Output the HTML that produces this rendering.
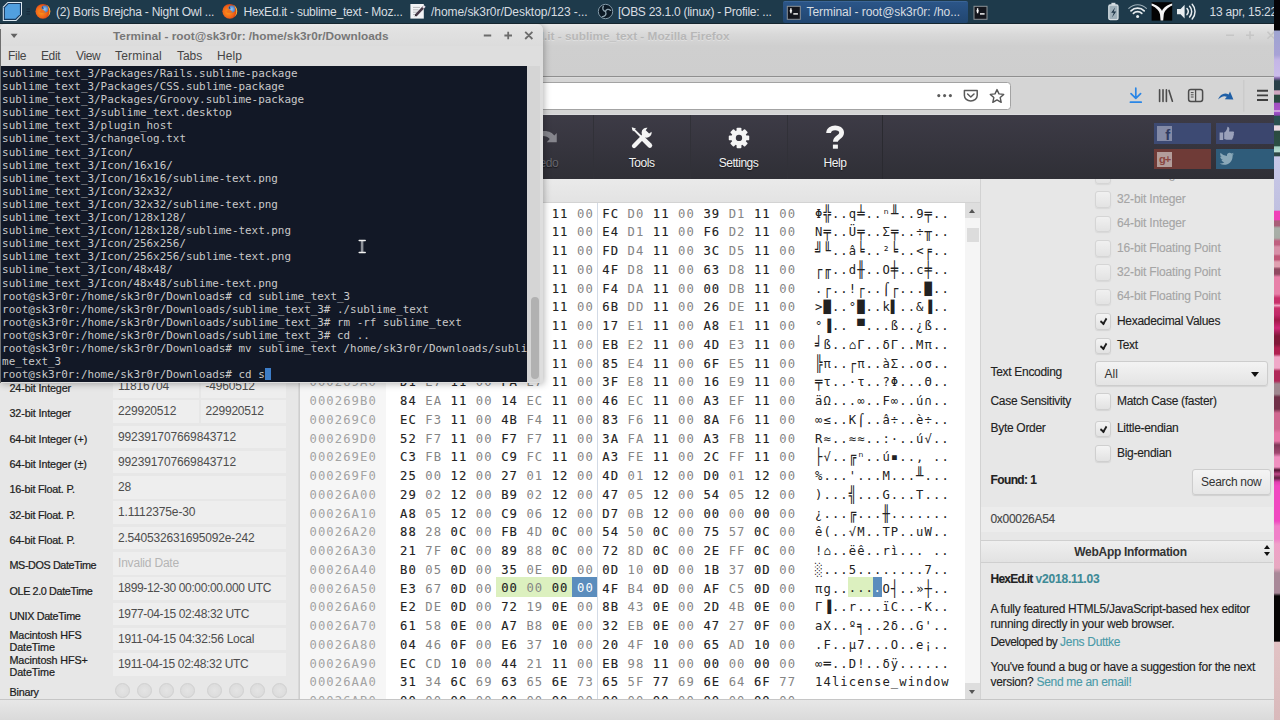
<!DOCTYPE html>
<html lang="en">
<head>
<meta charset="utf-8">
<title>HexEd.it - sublime_text - Mozilla Firefox</title>
<style>
*{box-sizing:border-box;margin:0;padding:0}
html,body{width:1280px;height:720px;overflow:hidden;background:#d6d6d6}
body{position:relative;font-family:"Liberation Sans",sans-serif;font-size:12px;color:#222}
.abs{position:absolute}
i,u{font-style:normal;text-decoration:none}

/* wallpaper strip */
#wall{left:1274px;top:0;width:6px;height:720px;z-index:50;background:linear-gradient(180deg,#050306 0px,#050306 30px,#9ea4d0 31px,#a8a2d6 55px,#c4b6e6 60px,#cbbcea 76px,#8a6ab0 78px,#2a4048 81px,#2a4048 89.5px,#d0a8c0 91px,#d0a8c0 94px,#2a4a40 95.5px,#2a4a40 102px,#a050c0 103.5px,#a854c8 109.5px,#e0c8e4 111px,#a050c8 112.5px,#8a48b0 115px,#2a5050 116.5px,#2a5050 124.5px,#e8d8e0 126px,#e8d8e0 130px,#2a4a40 131.5px,#2c5044 145.5px,#a0d0c0 147px,#b8dcd0 151.5px,#304848 153px,#304848 155.5px,#c8c8e8 157px,#c0c0e0 210px,#f040b8 211.5px,#f040b8 219.5px,#a86078 221px,#a86078 225.5px,#a8b0a8 228px,#a8aca6 238px,#c06080 241px,#c06080 244.5px,#d890a8 247px,#d890a8 254px,#c05878 256px,#c05878 259.5px,#e0a0b0 262px,#e0a0b0 266.5px,#904860 269px,#904860 274px,#e880a8 277px,#e880a8 294px,#c8306a 298px,#c8306a 303px,#f0a0c0 305.5px,#c8306a 308px,#c02868 315px,#a01848 320px,#d02878 328px,#801838 336px,#801838 344px,#b02050 348px,#b02050 354px,#f0a8c8 357px,#f0a8c8 368px,#b02858 371px,#b02858 381px,#a08890 384px,#a08890 394px,#703048 397px,#703048 409px,#d06890 413px,#d06890 429px,#e878a8 433px,#e878a8 441px,#803858 445px,#a04870 453px,#f090c0 457px,#f090c0 467px,#501030 470px,#c04888 474px,#602040 478px,#e040b0 482px,#f048c0 486px,#f048c0 521px,#f080c8 526px,#f080c8 539px,#f0a0c8 544px,#e8a8c0 568px,#a88898 573px,#a88898 593px,#060405 596px,#060405 641px,#e2c2c4 642.5px,#d9b9bb 720px)}

/* top panel */
#panel{left:0;top:0;width:1280px;height:23.5px;background:#1e3a4b;border-bottom:1px solid #15262f;color:#d8dde1;font-size:12px;letter-spacing:-.22px;white-space:nowrap}
#panel .t{position:absolute;top:5px;line-height:14px}
#panel .act{position:absolute;left:783px;top:1px;width:185px;height:21.5px;background:linear-gradient(#2b5588,#214670);border-top:1px solid #3a6496;border-radius:2px}

/* firefox window */
#ff{left:0;top:0;width:1274px;height:720px;background:#cecece}
#fftitle{left:0;top:23.5px;width:1274px;height:53px;background:linear-gradient(#e9e9e9 0,#e3e3e3 3px,#d9d9d9 10px,#cfcfcf 22px,#cecece 53px);color:#b7b7b7;text-shadow:0 1px 0 rgba(255,255,255,.3);font-weight:bold;font-size:11.8px;white-space:nowrap}
#nav{left:0;top:76px;width:1274px;height:39px;background:#d5d5d5;border-top:1px solid #8f8f8f;border-bottom:1px solid #dcdcde;box-shadow:inset 0 1px 0 #dbdbdb}
#url{left:300px;top:5px;width:711px;height:28px;background:#fff;border:1px solid #a3a3a3;border-radius:3.5px}

/* web app */
#tool{left:0;top:115px;width:1274px;height:63.6px;background:linear-gradient(#3d3b46,#36353e 50%,#2f2f36);color:#f2f2f2}
.tb{position:absolute;top:0;height:63.6px;border-left:1px solid #313138;text-align:center;font-size:12px;letter-spacing:-.48px;text-shadow:0 1px 1px rgba(0,0,0,.5)}
.tb span{position:absolute;left:0;right:0;top:41px;line-height:14px}
.tb svg{position:absolute;left:50%;top:8.5px;margin-left:-13px}
#strip{left:299px;top:178.5px;width:681px;height:24.3px;background:linear-gradient(#eaeaea,#e3e3e3);border-bottom:1px solid #d3d3d3}
#lp{left:0;top:179px;width:299px;height:520px;background:#e7e7e7;border-right:1px solid #d8d8d8}
#hex{left:300px;top:203px;width:681px;height:496px;background:#fff;overflow:hidden}
#adbg{left:0;top:0;width:86px;height:496px;background:#f6f6f6}
#rp{left:980px;top:178.5px;width:294px;height:520.5px;background:#e7e7e7;border-left:1px solid #d2d2d2;overflow:hidden}
#status{left:0;top:699px;width:1274px;height:21px;background:linear-gradient(#e7e7e7,#e2e2e2 8px,#dadada);border-top:1px solid #c6c6c6}

/* hex rows */
.hr{position:absolute;left:0;height:18.75px;line-height:23px;font-family:"DejaVu Sans Mono","Liberation Mono",monospace;font-size:12.2px;letter-spacing:1.085px;white-space:pre;width:681px}
.hr .ad{position:absolute;left:9.5px;color:#a3a3a3}
.hr .hx{position:absolute;left:95.3px}
.hr .hx i{display:inline-block;width:25.29px;text-align:center;height:18.75px;vertical-align:top;padding-left:1px}
.hr .tx{position:absolute;left:515.04px}
.hr .tx u{display:inline-block;width:8.43px;height:18.75px;vertical-align:top;overflow:visible;letter-spacing:0;text-align:center;margin-left:-.54px;margin-right:.54px}
.hr .tx b{font-weight:normal;display:inline-block;height:19.4px;vertical-align:top;margin-top:-.3px;margin-left:-.54px;padding-left:.54px}
.hr .tx b.hb{margin-left:0;padding-left:0;position:relative;left:-.54px}
.bx{transform:scaleY(1.3);transform-origin:50% 62%}
.b{color:#222;font-weight:normal;-webkit-text-stroke:.12px #222}
.g{color:#858585}
.hg{background:#dcf0bf}
.hr i.hg,.hr i.hb{height:19.4px;margin-top:-.3px}
.hb{background:#5b8dbd;color:#fff !important}
#sep{left:297px;top:0;width:1px;height:496px;background:#d3dbe6}
#vsb{left:665px;top:0;width:15px;height:496px;background:#f5f5f5}

/* left panel */
.lr{position:absolute;left:9.5px;font-size:10.8px;letter-spacing:-.14px;color:#1c1c1c;white-space:nowrap;line-height:11.6px;-webkit-text-stroke:.22px #1c1c1c}
.vb{position:absolute;height:22.5px;background:#eeeeee;font-size:12px;letter-spacing:-.2px;color:#4d4d4d;line-height:23px;padding-left:5px;white-space:nowrap;overflow:hidden}

/* right panel */
.cb{position:absolute;left:113.5px;width:16.5px;height:16.5px;border-radius:3px;background:linear-gradient(#f4f4f4,#e2e2e2);border:1px solid #cfcfcf;box-shadow:0 1px 1px rgba(0,0,0,.08)}
.cl{position:absolute;left:136px;font-size:12px;letter-spacing:-.3px;white-space:nowrap;line-height:14px;color:#222;-webkit-text-stroke:.12px}
.dis{color:#a5a5a5;letter-spacing:-.15px}
.rl{position:absolute;left:9.5px;font-size:12px;letter-spacing:-.3px;white-space:nowrap;line-height:14px;color:#222;-webkit-text-stroke:.12px}
.ck:after{content:"";position:absolute;left:5px;top:3.4px;width:3px;height:5.4px;border:solid #1d1d1d;border-width:0 2px 2px 0;transform:rotate(42deg) skewX(12deg)}

/* terminal window */
#term{left:0;top:24px;width:542.5px;height:358.5px;background:#dedede;border-radius:5px 6px 0 0;box-shadow:1px 1px 7px rgba(0,0,0,.3)}
#ttitle{left:0;top:0;width:542.5px;height:22px;color:#777;font-weight:bold;font-size:11.8px;white-space:nowrap;background:linear-gradient(#e9e9e9,#e2e2e2 4px,#dcdcdc);border-radius:5px 6px 0 0}
#tmenu{left:0;top:22px;width:542px;height:20px;font-size:12px;letter-spacing:0;color:#454545}
#tmenu span{position:absolute;top:3px}
#tbody{left:0;top:42px;width:527.3px;height:316px;background:#121826;color:#c9c9c9;font-family:"DejaVu Sans Mono","Liberation Mono",monospace;font-size:10.92px;line-height:13.09px;white-space:pre;overflow:hidden;padding:1px 0 0 2.1px}
#tsb{left:527.3px;top:42px;width:12.9px;height:316px;background:#d5d5d5}
#tthumb{left:3.4px;top:231px;width:8.4px;height:82px;border-radius:4px;background:#b1b1b1}
.cur{background:#3d7dc8;display:inline-block;width:6px;height:12px;vertical-align:-2px}
</style>
</head>
<body>
<div id="ff" class="abs">
  <div id="fftitle" class="abs"><span class="abs" style="right:544.5px;top:5.5px">HexEd.it - sublime_text - Mozilla Firefox</span>
    <svg class="abs" style="left:1220px;top:4.5px" width="54" height="16" viewBox="0 0 54 16"><path d="M6,7.3 h8 M26,7.3 h8 M30,3.3 v8 M47.5,3.8 l7,7 M54.5,3.8 l-7,7" stroke="#c6c6c6" stroke-width="1.6" fill="none"/></svg></div>
  <div id="nav" class="abs"><div id="url" class="abs"></div>
    <svg class="abs" style="left:920px;top:0" width="354" height="39" viewBox="920 77 354 39">
      <g fill="#5c5c5c"><circle cx="938.8" cy="95.6" r="1.55"/><circle cx="944.6" cy="95.6" r="1.55"/><circle cx="950.4" cy="95.6" r="1.55"/></g>
      <path d="M964.4,90.4 H977.2 V95.4 A6.4,5.6 0 0 1 964.4,95.4 Z" fill="none" stroke="#595959" stroke-width="1.5" stroke-linejoin="round"/>
      <path d="M967.6,94 l3.2,3 l3.2,-3" fill="none" stroke="#595959" stroke-width="1.5" stroke-linecap="round" stroke-linejoin="round"/>
      <path d="M997,89.6 l2,4.3 l4.7,0.5 l-3.5,3.2 l1,4.7 l-4.2,-2.4 l-4.2,2.4 l1,-4.7 l-3.5,-3.2 l4.7,-0.5z" fill="none" stroke="#555" stroke-width="1.4" stroke-linejoin="round"/>
      <path d="M1135.8,88.2 v9.8 M1131,93.6 l4.8,4.8 l4.8,-4.8" fill="none" stroke="#2a86e6" stroke-width="1.7" stroke-linecap="round" stroke-linejoin="round"/>
      <path d="M1130.4,102.2 h10.8" stroke="#2a86e6" stroke-width="1.7" stroke-linecap="round"/>
      <path d="M1159.6,89.8 v11.6 M1163,89.8 v11.6 M1166.4,89.8 v11.6 M1169,90.4 l3.4,10.8" stroke="#4c4c4c" stroke-width="1.6" fill="none" stroke-linecap="round"/>
      <rect x="1188.6" y="89.6" width="14" height="11.8" rx="2.2" fill="none" stroke="#4c4c4c" stroke-width="1.5"/>
      <path d="M1195.6,89.6 v11.8" stroke="#4c4c4c" stroke-width="1.3"/>
      <path d="M1190.8,92.6 h2.8 M1190.8,94.8 h2.8 M1190.8,97 h2.8" stroke="#4c4c4c" stroke-width="1"/>
      <path d="M1218,99.6 C1220,94 1225,92.2 1228.6,94.6 L1230,91.4 L1233.4,99.6 L1224.8,99.2 L1226.8,96.8 C1224,95.4 1221,96.6 1218,99.6Z" fill="#1f5fa6"/>
      <path d="M1243.8,80 v31.6" stroke="#c6c6c6" stroke-width="1"/>
      <path d="M1257,90.8 h11 M1257,95.4 h11 M1257,100 h11" stroke="#3f3f3f" stroke-width="1.9"/>
    </svg>
  </div>
  <div id="tool" class="abs">
    <div class="tb" style="left:495.8px;width:96.9px;color:#66666d"><span>Redo</span>
      <svg width="26" height="26" viewBox="0 0 26 26" style="margin-left:-13px"><path d="M2,14 C4,9 8,7 10.75,7 C16.75,6.5 20.75,9 22.25,11.5 L24.75,9 L24.75,18.2 L14.75,18.2 L17.75,15 C16.25,13 13.75,12 10.75,12 C7,12 4,14 2,18Z" fill="#86868d"/></svg></div>
    <div class="tb" style="left:592.7px;width:96.9px"><span>Tools</span>
      <svg width="26" height="26" viewBox="0 0 26 26"><g transform="translate(12.6 13.4) scale(.9) translate(-13 -12.8)"><g fill="none" stroke="#f4f4f4" stroke-linecap="round">
        <path d="M3.4,3 L12,11.6" stroke-width="2.2"/><path d="M3.2,2.8 l2,0.6 l-1.4,1.4z" stroke-width="1.6"/><path d="M14.8,14.4 L22.2,21.8" stroke-width="5.2" stroke-linecap="round"/>
        <path d="M4.6,22.4 L15.2,11.6" stroke-width="4.8"/>
        </g>
        <path d="M19.57,2.08 A5.6,5.6 0 1 0 24.11,6.63 L21.4,8.6 L17.6,4.9 Z" fill="#f4f4f4"/></g>
      </svg></div>
    <div class="tb" style="left:689.6px;width:96.9px"><span>Settings</span>
      <svg width="26" height="26" viewBox="-13 -13 26 26"><g transform="translate(0 .9) scale(.93)"><g fill="#f4f4f4">
        <g id="gt"><rect x="-2.6" y="-11" width="5.2" height="22" rx="1"/></g>
        <use href="#gt" transform="rotate(45)"/><use href="#gt" transform="rotate(90)"/><use href="#gt" transform="rotate(135)"/>
        <circle r="8.2"/></g><circle r="3.4" fill="#37363f"/></g>
      </svg></div>
    <div class="tb" style="left:786.5px;width:96.9px;border-right:1px solid #2a2a30"><span>Help</span>
      <svg width="26" height="26" viewBox="0 -0.7 26 26"><path d="M6.6,8.4 C6.6,1.4 19.6,1.4 19.6,8 C19.6,12.6 13.4,12.4 13.4,17" fill="none" stroke="#f4f4f4" stroke-width="4.8"/><rect x="10.9" y="19.9" width="5" height="4.1" fill="#f4f4f4"/></svg></div>
    <div class="abs" style="left:1153.7px;top:7.5px;width:57.3px;height:21.3px;background:#3d4a73"><div class="abs" style="left:3.3px;top:3.2px;width:15.2px;height:15px;background:#838aa6;color:#2f3a60;font:bold 15px/17px 'Liberation Sans',sans-serif;text-align:right;padding-right:2px;overflow:hidden">f</div></div>
    <div class="abs" style="left:1216px;top:7.5px;width:58px;height:21.3px;background:#3b466e">
      <svg class="abs" style="left:3px;top:3px" width="16" height="15" viewBox="0 0 16 15"><path d="M0.6,6.4 h3.6 v7.6 h-3.6z M5.2,6.6 C7.4,5.4 8.2,3.2 8.4,0.8 C10.4,0.6 10.8,3 10,5.6 H14 C15.4,5.8 15.4,7.2 14.6,7.8 C15.2,8.6 15,9.6 14.2,10 C14.6,10.8 14.4,11.6 13.6,12 C13.8,13 13.2,13.8 12,13.8 H7.6 L5.2,13z" fill="#9aa1ba"/></svg></div>
    <div class="abs" style="left:1153.7px;top:34.1px;width:57.3px;height:20.3px;background:#6f3b37"><div class="abs" style="left:3.3px;top:2.8px;width:15.2px;height:15px;background:#b39d9a;color:#8a4640;font:bold 11px/14px 'Liberation Sans',sans-serif;letter-spacing:-1px;text-align:center;overflow:hidden">g+</div></div>
    <div class="abs" style="left:1216px;top:34.1px;width:58px;height:20.3px;background:#2f5c7a">
      <svg class="abs" style="left:3px;top:3px" width="16" height="14" viewBox="0 0 16 14"><path d="M15,2 C14.4,2.4 13.8,2.6 13.2,2.6 C14,2.2 14.4,1.6 14.6,0.8 C14,1.2 13.2,1.6 12.6,1.6 C10.6,-0.4 7.4,1.2 8,4 C5.4,3.8 3.2,2.6 1.6,0.8 C0.8,2.2 1.2,4 2.6,5 C2,5 1.6,4.8 1.2,4.6 C1.2,6.2 2.2,7.4 3.8,7.8 C3.4,8 2.8,8 2.4,7.8 C2.8,9.2 4,10 5.4,10.2 C4,11.2 2.4,11.6 0.6,11.4 C6.6,15.2 14,10.8 13.6,3.6 C14.2,3.2 14.6,2.6 15,2Z" fill="#8aa8b8"/></svg></div>
  </div>
  <div id="lp" class="abs">
<div class="lr" style="top:204.2px;letter-spacing:-0.150px">24-bit Integer</div>
<div class="lr" style="top:229.2px;letter-spacing:-0.150px">32-bit Integer</div>
<div class="lr" style="top:254.7px;letter-spacing:-0.140px">64-bit Integer (+)</div>
<div class="lr" style="top:280.2px;letter-spacing:-0.140px">64-bit Integer (±)</div>
<div class="lr" style="top:305.2px;letter-spacing:-0.220px">16-bit Float. P.</div>
<div class="lr" style="top:330.7px;letter-spacing:-0.220px">32-bit Float. P.</div>
<div class="lr" style="top:356.2px;letter-spacing:-0.220px">64-bit Float. P.</div>
<div class="lr" style="top:381.2px;letter-spacing:-0.390px">MS-DOS DateTime</div>
<div class="lr" style="top:406.7px;letter-spacing:-0.376px">OLE 2.0 DateTime</div>
<div class="lr" style="top:432.2px;letter-spacing:-0.320px">UNIX DateTime</div>
<div class="lr" style="top:451.1px">Macintosh HFS<br>DateTime</div>
<div class="lr" style="top:476.1px">Macintosh HFS+<br>DateTime</div>
<div class="lr" style="top:508.2px;letter-spacing:-.22px">Binary</div>
<div class="vb" style="left:113px;width:85.5px;top:196.0px">11816704</div><div class="vb" style="left:200.5px;width:85.5px;top:196.0px">-4960512</div>
<div class="vb" style="left:113px;width:85.5px;top:221.2px">229920512</div><div class="vb" style="left:200.5px;width:85.5px;top:221.2px">229920512</div>
<div class="vb" style="left:113px;width:173px;top:246.5px;letter-spacing:-.12px">992391707669843712</div>
<div class="vb" style="left:113px;width:173px;top:271.8px;letter-spacing:-.12px">992391707669843712</div>
<div class="vb" style="left:113px;width:173px;top:297.1px;letter-spacing:-.12px">28</div>
<div class="vb" style="left:113px;width:173px;top:322.4px;letter-spacing:-.12px">1.1112375e-30</div>
<div class="vb" style="left:113px;width:173px;top:347.7px;letter-spacing:-.2px">2.540532631695092e-242</div>
<div class="vb" style="left:113px;width:173px;top:373.0px;color:#b5b5b5">Invalid Date</div>
<div class="vb" style="left:113px;width:173px;top:398.3px;letter-spacing:-.36px">1899-12-30 00:00:00.000 UTC</div>
<div class="vb" style="left:113px;width:173px;top:423.6px;letter-spacing:-.36px">1977-04-15 02:48:32 UTC</div>
<div class="vb" style="left:113px;width:173px;top:448.9px;letter-spacing:-.26px">1911-04-15 04:32:56 Local</div>
<div class="vb" style="left:113px;width:173px;top:474.2px;letter-spacing:-.36px">1911-04-15 02:48:32 UTC</div>
<div class="abs" style="left:115.0px;top:503.5px;width:15px;height:15px;border-radius:50%;background:radial-gradient(#e4e4e4,#d9d9d9);border:1px solid #d0d0d0"></div>
<div class="abs" style="left:136.5px;top:503.5px;width:15px;height:15px;border-radius:50%;background:radial-gradient(#e4e4e4,#d9d9d9);border:1px solid #d0d0d0"></div>
<div class="abs" style="left:158.5px;top:503.5px;width:15px;height:15px;border-radius:50%;background:radial-gradient(#e4e4e4,#d9d9d9);border:1px solid #d0d0d0"></div>
<div class="abs" style="left:180.0px;top:503.5px;width:15px;height:15px;border-radius:50%;background:radial-gradient(#e4e4e4,#d9d9d9);border:1px solid #d0d0d0"></div>
<div class="abs" style="left:207.0px;top:503.5px;width:15px;height:15px;border-radius:50%;background:radial-gradient(#e4e4e4,#d9d9d9);border:1px solid #d0d0d0"></div>
<div class="abs" style="left:228.5px;top:503.5px;width:15px;height:15px;border-radius:50%;background:radial-gradient(#e4e4e4,#d9d9d9);border:1px solid #d0d0d0"></div>
<div class="abs" style="left:250.0px;top:503.5px;width:15px;height:15px;border-radius:50%;background:radial-gradient(#e4e4e4,#d9d9d9);border:1px solid #d0d0d0"></div>
<div class="abs" style="left:271.5px;top:503.5px;width:15px;height:15px;border-radius:50%;background:radial-gradient(#e4e4e4,#d9d9d9);border:1px solid #d0d0d0"></div>
  </div>
  <div id="strip" class="abs"></div>
  <div id="hex" class="abs">
    <div id="adbg" class="abs"></div>
<div class="hr" style="top:-0.40px"><span class="ad">00026910</span><span class="hx"><i class="b">E8</i><i class="g">CE</i><i class="b">11</i><i class="g">00</i><i class="b">71</i><i class="g">CF</i><i class="b">11</i><i class="g">00</i><i class="b">FC</i><i class="g">D0</i><i class="b">11</i><i class="g">00</i><i class="b">39</i><i class="g">D1</i><i class="b">11</i><i class="g">00</i></span><span class="tx">Φ<u class="bx">╬</u>..q<u class="bx">╧</u>..ⁿ<u class="bx">╨</u>..9<u class="bx">╤</u>..</span></div>
<div class="hr" style="top:18.35px"><span class="ad">00026920</span><span class="hx"><i class="b">4E</i><i class="g">D1</i><i class="b">11</i><i class="g">00</i><i class="b">9A</i><i class="g">D1</i><i class="b">11</i><i class="g">00</i><i class="b">E4</i><i class="g">D1</i><i class="b">11</i><i class="g">00</i><i class="b">F6</i><i class="g">D2</i><i class="b">11</i><i class="g">00</i></span><span class="tx">N<u class="bx">╤</u>..Ü<u class="bx">╤</u>..Σ<u class="bx">╤</u>..÷<u class="bx">╥</u>..</span></div>
<div class="hr" style="top:37.10px"><span class="ad">00026930</span><span class="hx"><i class="b">BC</i><i class="g">D3</i><i class="b">11</i><i class="g">00</i><i class="b">83</i><i class="g">D4</i><i class="b">11</i><i class="g">00</i><i class="b">FD</i><i class="g">D4</i><i class="b">11</i><i class="g">00</i><i class="b">3C</i><i class="g">D5</i><i class="b">11</i><i class="g">00</i></span><span class="tx"><u class="bx">╝</u><u class="bx">╙</u>..â<u class="bx">╘</u>..²<u class="bx">╘</u>..&lt;<u class="bx">╒</u>..</span></div>
<div class="hr" style="top:55.85px"><span class="ad">00026940</span><span class="hx"><i class="b">DA</i><i class="g">D6</i><i class="b">11</i><i class="g">00</i><i class="b">64</i><i class="g">D7</i><i class="b">11</i><i class="g">00</i><i class="b">4F</i><i class="g">D8</i><i class="b">11</i><i class="g">00</i><i class="b">63</i><i class="g">D8</i><i class="b">11</i><i class="g">00</i></span><span class="tx"><u class="bx">┌</u><u class="bx">╓</u>..d<u class="bx">╫</u>..O<u class="bx">╪</u>..c<u class="bx">╪</u>..</span></div>
<div class="hr" style="top:74.60px"><span class="ad">00026950</span><span class="hx"><i class="b">05</i><i class="g">DA</i><i class="b">11</i><i class="g">00</i><i class="b">21</i><i class="g">DA</i><i class="b">11</i><i class="g">00</i><i class="b">F4</i><i class="g">DA</i><i class="b">11</i><i class="g">00</i><i class="b">00</i><i class="g">DB</i><i class="b">11</i><i class="g">00</i></span><span class="tx">.<u class="bx">┌</u>..!<u class="bx">┌</u>..⌠<u class="bx">┌</u>...█..</span></div>
<div class="hr" style="top:93.35px"><span class="ad">00026960</span><span class="hx"><i class="b">3E</i><i class="g">DB</i><i class="b">11</i><i class="g">00</i><i class="b">F8</i><i class="g">DB</i><i class="b">11</i><i class="g">00</i><i class="b">6B</i><i class="g">DD</i><i class="b">11</i><i class="g">00</i><i class="b">26</i><i class="g">DE</i><i class="b">11</i><i class="g">00</i></span><span class="tx">&gt;█..°█..k▌..&amp;▐..</span></div>
<div class="hr" style="top:112.10px"><span class="ad">00026970</span><span class="hx"><i class="b">F8</i><i class="g">DE</i><i class="b">11</i><i class="g">00</i><i class="b">FF</i><i class="g">DF</i><i class="b">11</i><i class="g">00</i><i class="b">17</i><i class="g">E1</i><i class="b">11</i><i class="g">00</i><i class="b">A8</i><i class="g">E1</i><i class="b">11</i><i class="g">00</i></span><span class="tx">°▐.. ▀...ß..¿ß..</span></div>
<div class="hr" style="top:130.85px"><span class="ad">00026980</span><span class="hx"><i class="b">BE</i><i class="g">E1</i><i class="b">11</i><i class="g">00</i><i class="b">7F</i><i class="g">E2</i><i class="b">11</i><i class="g">00</i><i class="b">EB</i><i class="g">E2</i><i class="b">11</i><i class="g">00</i><i class="b">4D</i><i class="g">E3</i><i class="b">11</i><i class="g">00</i></span><span class="tx"><u class="bx">╛</u>ß..⌂Γ..δΓ..Mπ..</span></div>
<div class="hr" style="top:149.60px"><span class="ad">00026990</span><span class="hx"><i class="b">CC</i><i class="g">E3</i><i class="b">11</i><i class="g">00</i><i class="b">DA</i><i class="g">E3</i><i class="b">11</i><i class="g">00</i><i class="b">85</i><i class="g">E4</i><i class="b">11</i><i class="g">00</i><i class="b">6F</i><i class="g">E5</i><i class="b">11</i><i class="g">00</i></span><span class="tx"><u class="bx">╠</u>π..<u class="bx">┌</u>π..àΣ..oσ..</span></div>
<div class="hr" style="top:168.35px"><span class="ad">000269A0</span><span class="hx"><i class="b">D1</i><i class="g">E7</i><i class="b">11</i><i class="g">00</i><i class="b">FA</i><i class="g">E7</i><i class="b">11</i><i class="g">00</i><i class="b">3F</i><i class="g">E8</i><i class="b">11</i><i class="g">00</i><i class="b">16</i><i class="g">E9</i><i class="b">11</i><i class="g">00</i></span><span class="tx"><u class="bx">╤</u>τ..·τ..?Φ...Θ..</span></div>
<div class="hr" style="top:187.10px"><span class="ad">000269B0</span><span class="hx"><i class="b">84</i><i class="g">EA</i><i class="b">11</i><i class="g">00</i><i class="b">14</i><i class="g">EC</i><i class="b">11</i><i class="g">00</i><i class="b">46</i><i class="g">EC</i><i class="b">11</i><i class="g">00</i><i class="b">A3</i><i class="g">EF</i><i class="b">11</i><i class="g">00</i></span><span class="tx">äΩ...∞..F∞..ú∩..</span></div>
<div class="hr" style="top:205.85px"><span class="ad">000269C0</span><span class="hx"><i class="b">EC</i><i class="g">F3</i><i class="b">11</i><i class="g">00</i><i class="b">4B</i><i class="g">F4</i><i class="b">11</i><i class="g">00</i><i class="b">83</i><i class="g">F6</i><i class="b">11</i><i class="g">00</i><i class="b">8A</i><i class="g">F6</i><i class="b">11</i><i class="g">00</i></span><span class="tx">∞≤..K⌠..â÷..è÷..</span></div>
<div class="hr" style="top:224.60px"><span class="ad">000269D0</span><span class="hx"><i class="b">52</i><i class="g">F7</i><i class="b">11</i><i class="g">00</i><i class="b">F7</i><i class="g">F7</i><i class="b">11</i><i class="g">00</i><i class="b">3A</i><i class="g">FA</i><i class="b">11</i><i class="g">00</i><i class="b">A3</i><i class="g">FB</i><i class="b">11</i><i class="g">00</i></span><span class="tx">R≈..≈≈..:·..ú√..</span></div>
<div class="hr" style="top:243.35px"><span class="ad">000269E0</span><span class="hx"><i class="b">C3</i><i class="g">FB</i><i class="b">11</i><i class="g">00</i><i class="b">C9</i><i class="g">FC</i><i class="b">11</i><i class="g">00</i><i class="b">A3</i><i class="g">FE</i><i class="b">11</i><i class="g">00</i><i class="b">2C</i><i class="g">FF</i><i class="b">11</i><i class="g">00</i></span><span class="tx"><u class="bx">├</u>√..<u class="bx">╔</u>ⁿ..ú▪.., ..</span></div>
<div class="hr" style="top:262.10px"><span class="ad">000269F0</span><span class="hx"><i class="b">25</i><i class="g">00</i><i class="b">12</i><i class="g">00</i><i class="b">27</i><i class="g">01</i><i class="b">12</i><i class="g">00</i><i class="b">4D</i><i class="g">01</i><i class="b">12</i><i class="g">00</i><i class="b">D0</i><i class="g">01</i><i class="b">12</i><i class="g">00</i></span><span class="tx">%...&#x27;...M...<u class="bx">╨</u>...</span></div>
<div class="hr" style="top:280.85px"><span class="ad">00026A00</span><span class="hx"><i class="b">29</i><i class="g">02</i><i class="b">12</i><i class="g">00</i><i class="b">B9</i><i class="g">02</i><i class="b">12</i><i class="g">00</i><i class="b">47</i><i class="g">05</i><i class="b">12</i><i class="g">00</i><i class="b">54</i><i class="g">05</i><i class="b">12</i><i class="g">00</i></span><span class="tx">)...<u class="bx">╣</u>...G...T...</span></div>
<div class="hr" style="top:299.60px"><span class="ad">00026A10</span><span class="hx"><i class="b">A8</i><i class="g">05</i><i class="b">12</i><i class="g">00</i><i class="b">C9</i><i class="g">06</i><i class="b">12</i><i class="g">00</i><i class="b">D7</i><i class="g">0B</i><i class="b">12</i><i class="g">00</i><i class="b">00</i><i class="g">00</i><i class="b">00</i><i class="g">00</i></span><span class="tx">¿...<u class="bx">╔</u>...<u class="bx">╫</u>.......</span></div>
<div class="hr" style="top:318.35px"><span class="ad">00026A20</span><span class="hx"><i class="b">88</i><i class="g">28</i><i class="b">0C</i><i class="g">00</i><i class="b">FB</i><i class="g">4D</i><i class="b">0C</i><i class="g">00</i><i class="b">54</i><i class="g">50</i><i class="b">0C</i><i class="g">00</i><i class="b">75</i><i class="g">57</i><i class="b">0C</i><i class="g">00</i></span><span class="tx">ê(..√M..TP..uW..</span></div>
<div class="hr" style="top:337.10px"><span class="ad">00026A30</span><span class="hx"><i class="b">21</i><i class="g">7F</i><i class="b">0C</i><i class="g">00</i><i class="b">89</i><i class="g">88</i><i class="b">0C</i><i class="g">00</i><i class="b">72</i><i class="g">8D</i><i class="b">0C</i><i class="g">00</i><i class="b">2E</i><i class="g">FF</i><i class="b">0C</i><i class="g">00</i></span><span class="tx">!⌂..ëê..rì... ..</span></div>
<div class="hr" style="top:355.85px"><span class="ad">00026A40</span><span class="hx"><i class="b">B0</i><i class="g">05</i><i class="b">0D</i><i class="g">00</i><i class="b">35</i><i class="g">0E</i><i class="b">0D</i><i class="g">00</i><i class="b">0D</i><i class="g">10</i><i class="b">0D</i><i class="g">00</i><i class="b">1B</i><i class="g">37</i><i class="b">0D</i><i class="g">00</i></span><span class="tx">░...5........7..</span></div>
<div class="hr" style="top:374.60px"><span class="ad">00026A50</span><span class="hx"><i class="b">E3</i><i class="g">67</i><i class="b">0D</i><i class="g">00</i><i class="b hg">00</i><i class="g hg">00</i><i class="b hg">00</i><i class="g hb">00</i><i class="b">4F</i><i class="g">B4</i><i class="b">0D</i><i class="g">00</i><i class="b">AF</i><i class="g">C5</i><i class="b">0D</i><i class="g">00</i></span><span class="tx">πg..<b class="hg">...</b><b class="hb">.</b>O<u class="bx">┤</u>..»<u class="bx">┼</u>..</span></div>
<div class="hr" style="top:393.35px"><span class="ad">00026A60</span><span class="hx"><i class="b">E2</i><i class="g">DE</i><i class="b">0D</i><i class="g">00</i><i class="b">72</i><i class="g">19</i><i class="b">0E</i><i class="g">00</i><i class="b">8B</i><i class="g">43</i><i class="b">0E</i><i class="g">00</i><i class="b">2D</i><i class="g">4B</i><i class="b">0E</i><i class="g">00</i></span><span class="tx">Γ▐..r...ïC..-K..</span></div>
<div class="hr" style="top:412.10px"><span class="ad">00026A70</span><span class="hx"><i class="b">61</i><i class="g">58</i><i class="b">0E</i><i class="g">00</i><i class="b">A7</i><i class="g">B8</i><i class="b">0E</i><i class="g">00</i><i class="b">32</i><i class="g">EB</i><i class="b">0E</i><i class="g">00</i><i class="b">47</i><i class="g">27</i><i class="b">0F</i><i class="g">00</i></span><span class="tx">aX..º<u class="bx">╕</u>..2δ..G&#x27;..</span></div>
<div class="hr" style="top:430.85px"><span class="ad">00026A80</span><span class="hx"><i class="b">04</i><i class="g">46</i><i class="b">0F</i><i class="g">00</i><i class="b">E6</i><i class="g">37</i><i class="b">10</i><i class="g">00</i><i class="b">20</i><i class="g">4F</i><i class="b">10</i><i class="g">00</i><i class="b">65</i><i class="g">AD</i><i class="b">10</i><i class="g">00</i></span><span class="tx">.F..µ7...O..e¡..</span></div>
<div class="hr" style="top:449.60px"><span class="ad">00026A90</span><span class="hx"><i class="b">EC</i><i class="g">CD</i><i class="b">10</i><i class="g">00</i><i class="b">44</i><i class="g">21</i><i class="b">11</i><i class="g">00</i><i class="b">EB</i><i class="g">98</i><i class="b">11</i><i class="g">00</i><i class="b">00</i><i class="g">00</i><i class="b">00</i><i class="g">00</i></span><span class="tx">∞<u class="bx">═</u>..D!..δÿ......</span></div>
<div class="hr" style="top:468.35px"><span class="ad">00026AA0</span><span class="hx"><i class="b">31</i><i class="g">34</i><i class="b">6C</i><i class="g">69</i><i class="b">63</i><i class="g">65</i><i class="b">6E</i><i class="g">73</i><i class="b">65</i><i class="g">5F</i><i class="b">77</i><i class="g">69</i><i class="b">6E</i><i class="g">64</i><i class="b">6F</i><i class="g">77</i></span><span class="tx">14license_window</span></div>
<div class="hr" style="top:487.10px"><span class="ad">00026AB0</span><span class="hx"><i class="b">00</i><i class="g">00</i><i class="b">00</i><i class="g">00</i><i class="b">00</i><i class="g">00</i><i class="b">00</i><i class="g">00</i><i class="b">00</i><i class="g">00</i><i class="b">00</i><i class="g">00</i><i class="b">00</i><i class="g">00</i><i class="b">00</i><i class="g">00</i></span><span class="tx">................</span></div>
    <div id="sep" class="abs"></div>
    <div id="vsb" class="abs"><div class="abs" style="left:0;top:0;width:15px;height:15px;background:#dedede"></div><div class="abs" style="left:4px;top:5.5px;border:3.6px solid transparent;border-bottom:4px solid #555;border-top:0"></div><div class="abs" style="left:1.5px;top:25px;width:12px;height:14px;background:#dcdcdc"></div><div class="abs" style="left:0;top:480px;width:15px;height:16px;background:#dedede"></div><div class="abs" style="left:4px;top:486.5px;border:3.6px solid transparent;border-top:4px solid #555;border-bottom:0"></div></div>
  </div>
  <div id="rp" class="abs">
<div class="cb" style="top:-11.5px;opacity:.75"></div><div class="cl dis" style="top:-11.5px">24-bit Integer</div>
<div class="cb" style="top:12.5px;opacity:.75"></div><div class="cl dis" style="top:13.0px">32-bit Integer</div>
<div class="cb" style="top:37.0px;opacity:.75"></div><div class="cl dis" style="top:37.5px">64-bit Integer</div>
<div class="cb" style="top:61.5px;opacity:.75"></div><div class="cl dis" style="top:62.0px">16-bit Floating Point</div>
<div class="cb" style="top:85.5px;opacity:.75"></div><div class="cl dis" style="top:86.0px">32-bit Floating Point</div>
<div class="cb" style="top:110.0px;opacity:.75"></div><div class="cl dis" style="top:110.5px">64-bit Floating Point</div>
<div class="cb ck" style="top:134.5px"></div><div class="cl" style="top:135.0px">Hexadecimal Values</div>
<div class="cb ck" style="top:159.0px"></div><div class="cl" style="top:159.5px">Text</div>
<div class="cb" style="top:214.5px"></div><div class="cl" style="top:215.0px">Match Case (faster)</div>
<div class="cb ck" style="top:242.0px"></div><div class="cl" style="top:242.5px">Little-endian</div>
<div class="cb" style="top:266.5px"></div><div class="cl" style="top:267.0px">Big-endian</div>
<div class="rl" style="top:186.7px">Text Encoding</div>
<div class="rl" style="top:215.7px">Case Sensitivity</div>
<div class="rl" style="top:242.7px">Byte Order</div>
<div class="abs" style="left:113.5px;top:182.2px;width:173px;height:25px;border-radius:3px;background:linear-gradient(#f3f3f3,#e4e4e4);border:1px solid #cdcdcd;box-shadow:0 1px 1px rgba(0,0,0,.08);font-size:12px;line-height:24.5px;padding-left:9px;color:#333">All<span class="abs" style="right:8px;top:10px;border:4px solid transparent;border-top:5px solid #111;width:0;height:0"></span></div>
<div class="rl" style="top:294.7px;font-weight:bold;letter-spacing:-.62px">Found: 1</div>
<div class="abs" style="left:210.5px;top:290.2px;width:79.5px;height:26.8px;border-radius:3px;background:linear-gradient(#f4f4f4,#e6e6e6);border:1px solid #cdcdcd;box-shadow:0 1px 1px rgba(0,0,0,.1);font-size:12px;letter-spacing:-.3px;line-height:25.5px;text-align:center;color:#333">Search now</div>
<div class="abs" style="left:0;top:328.0px;width:292px;height:25px;background:#ececec"></div>
<div class="rl" style="top:333.0px;color:#444">0x00026A54</div>
<div class="abs" style="left:0;top:361.0px;width:292px;height:23px;background:linear-gradient(#efefef,#e2e2e2);border-top:1px solid #cfcfcf;border-bottom:1px solid #cfcfcf;text-align:center;font-weight:bold;font-size:12px;line-height:23px;padding-left:7px;color:#333;letter-spacing:-.3px">WebApp Information<span class="abs" style="right:3px;top:4px;border:3px solid transparent;border-bottom:4px solid #111;border-top:0"></span><span class="abs" style="right:3px;top:11px;border:3px solid transparent;border-top:4px solid #111;border-bottom:0"></span></div>
<div class="rl" style="top:393.0px"><b style="letter-spacing:-.75px">HexEd.it</b> <b style="color:#3d8a96;letter-spacing:-.2px">v2018.11.03</b></div>
<div class="rl" style="top:423.3px;line-height:15.5px">A fully featured HTML5/JavaScript-based hex editor<br>running directly in your web browser.</div>
<div class="rl" style="top:456.0px"><span style="letter-spacing:-.55px">Developed by </span><span style="color:#4a9aa8">Jens Duttke</span></div>
<div class="rl" style="top:481.4px;line-height:15.2px">You've found a bug or have a suggestion for the next<br>version? <span style="color:#4a9aa8">Send me an email!</span></div>
  </div>
  <div id="status" class="abs"></div>
</div>
<div id="wall" class="abs"></div>

<div id="term" class="abs">
  <div id="ttitle" class="abs"><span class="abs" style="left:113px;top:4.5px">Terminal - root@sk3r0r: /home/sk3r0r/Downloads</span><svg class="abs" style="left:0;top:0" width="542" height="22" viewBox="0 24.8 542 22"><path d="M10.6,34.6 h7 l-3.5,4.2z" fill="#626262"/><path d="M483.8,36.3 h7.4 M504.4,36.3 h7.6 M508.2,32.5 v7.6 M525.2,32.6 l7.2,7.2 M532.4,32.6 l-7.2,7.2" stroke="#6c6c6c" stroke-width="1.8" fill="none"/></svg></div>
  <div id="tmenu" class="abs"><span style="left:8px;letter-spacing:-.3px">File</span><span style="left:41px;letter-spacing:-.4px">Edit</span><span style="left:76px;letter-spacing:-.4px">View</span><span style="left:115px;letter-spacing:.2px">Terminal</span><span style="left:177px;letter-spacing:-.05px">Tabs</span><span style="left:217px;letter-spacing:.08px">Help</span></div>
  <div id="tbody" class="abs">sublime_text_3/Packages/Rails.sublime-package
sublime_text_3/Packages/CSS.sublime-package
sublime_text_3/Packages/Groovy.sublime-package
sublime_text_3/sublime_text.desktop
sublime_text_3/plugin_host
sublime_text_3/changelog.txt
sublime_text_3/Icon/
sublime_text_3/Icon/16x16/
sublime_text_3/Icon/16x16/sublime-text.png
sublime_text_3/Icon/32x32/
sublime_text_3/Icon/32x32/sublime-text.png
sublime_text_3/Icon/128x128/
sublime_text_3/Icon/128x128/sublime-text.png
sublime_text_3/Icon/256x256/
sublime_text_3/Icon/256x256/sublime-text.png
sublime_text_3/Icon/48x48/
sublime_text_3/Icon/48x48/sublime-text.png
root@sk3r0r:/home/sk3r0r/Downloads# cd sublime_text_3
root@sk3r0r:/home/sk3r0r/Downloads/sublime_text_3# ./sublime_text
root@sk3r0r:/home/sk3r0r/Downloads/sublime_text_3# rm -rf sublime_text
root@sk3r0r:/home/sk3r0r/Downloads/sublime_text_3# cd ..
root@sk3r0r:/home/sk3r0r/Downloads# mv sublime_text /home/sk3r0r/Downloads/subli
me_text_3
root@sk3r0r:/home/sk3r0r/Downloads# cd s<span class="cur"></span></div>
  <svg class="abs" style="left:357px;top:214px" width="10" height="18" viewBox="357 238 10 18"><path d="M362.1,240.6 v12" stroke="#8d9199" stroke-width="2.6"/><path d="M359.2,240.5 h6 M359.2,252.6 h6" stroke="#f2f2f2" stroke-width="1.5" stroke-linecap="round"/></svg>
  <div id="tsb" class="abs"><div id="tthumb" class="abs"></div></div>
  <div class="abs" style="left:0;top:5px;width:1px;height:354px;background:#6e6e6e"></div>
</div>

<div id="panel" class="abs">
  <div class="act"></div>
  <svg class="abs" style="left:0;top:0" width="1280" height="24" viewBox="0 0 1280 24">
    <defs>
      <radialGradient id="fxo" cx="40%" cy="55%" r="65%"><stop offset="0" stop-color="#ff9a1a"/><stop offset=".6" stop-color="#f0621a"/><stop offset="1" stop-color="#c4300e"/></radialGradient>
      <radialGradient id="fxb" cx="50%" cy="50%" r="60%"><stop offset="0" stop-color="#9ec8f2"/><stop offset="1" stop-color="#2f6fc0"/></radialGradient>
      <g id="fx">
        <circle cx="0" cy="0" r="7.4" fill="url(#fxo)"/>
        <path d="M3.4,-6.6 A7.4,7.4 0 0 1 5.2,5.2 A9,9 0 0 0 3.4,-6.6Z" fill="#ffd24a"/>
        <circle cx="1.8" cy="-2.2" r="3.5" fill="url(#fxb)"/>
        <path d="M-2.5,-3.6 C-0.5,-2.6 0.5,-0.6 2.6,0.2 C1,2 -2,2.2 -4,0.4 C-2.4,0.4 -1.6,-0.8 -2.5,-3.6Z" fill="#f2701c"/>
        <path d="M-0.2,-5.4 l0.8,3.2 l-1.2,-0.6z" fill="#1c1a3a"/>
      </g>
      <g id="tmi">
        <rect x="0" y="0" width="13" height="13" fill="#14161d" stroke="#8c9296" stroke-width="1"/>
        <path d="M2.4,4.6 h2.4 M3.6,2 v5" stroke="#fff" stroke-width="1.4" fill="none"/>
        <path d="M6,7.6 h4.6" stroke="#fff" stroke-width="1.4"/>
      </g>
    </defs>
    <!-- whisker menu -->
    <path d="M7.6,1.9 H22 V15.1 L16.3,20.9 H2.8 V6.8 Z" fill="#dbe7ef"/>
    <path d="M8,2.9 H21 V14.7 L15.9,19.9 H3.8 V7.2 Z" fill="#17395e"/>
    <path d="M8.5,4 H19.9 V14.2 L15.4,18.8 H4.9 V7.7 Z" fill="#51a0e0"/>
    <path d="M26.5,9 h3.5 M26.5,11.5 h3.5 M26.5,14 h3.5" stroke="#16293a" stroke-width="1.2"/>
    <use href="#fx" x="42.9" y="11.3"/>
    <use href="#fx" x="229.8" y="11.3"/>
    <!-- text editor -->
    <rect x="410.4" y="4" width="13.4" height="14.6" fill="#f3f4f6"/>
    <path d="M413,7.4 h7 M413,9.8 h5.5 M413,12.2 h4.5 M413,14.6 h3" stroke="#b8babd" stroke-width="1"/>
    <path d="M415.6,15.6 L423.6,7.2" stroke="#4a3a48" stroke-width="2.6"/>
    <path d="M423,7.8 l1.8,-1.8" stroke="#e8e0ea" stroke-width="2.4"/>
    <path d="M414.6,16.4 l2,-0.6 l-1.2,-1.3z" fill="#2a2a2a"/>
    <!-- obs -->
    <circle cx="605.5" cy="11.5" r="7.2" fill="#0c1a26" stroke="#8299a8" stroke-width="1"/>
    <path d="M603.4,6.2 C602,8.6 603,10.8 605.5,11.5 M610.6,10.4 C608.6,8.6 606.2,9.2 605.5,11.5 M602.4,16.6 C605,16.8 606.8,14.4 605.5,11.5" stroke="#8fa4b0" stroke-width="1.3" fill="none" stroke-linecap="round"/>
    <use href="#tmi" x="787.3" y="6.3"/>
    <use href="#tmi" x="974" y="6.3"/>
    <!-- battery -->
    <rect x="1108.8" y="5" width="9.2" height="14.6" rx="1.4" fill="#9fb0ba" stroke="#d5dde2" stroke-width="1.3"/>
    <rect x="1111.4" y="2.8" width="4" height="2.2" fill="#d5dde2"/>
    <path d="M1115.2,7.2 l-4,5.6 h2.6 l-1.8,4.8 l4.2,-6.2 h-2.6z" fill="#1d3447"/>
    <!-- wifi -->
    <g fill="none" stroke="#e8edf0" stroke-linecap="round">
      <path d="M1128.8,8.4 A12.4,12.4 0 0 1 1146.4,8.4" stroke-width="1.1" stroke="#9fb0ba"/>
      <path d="M1131,10.8 A9.4,9.4 0 0 1 1144.2,10.8" stroke-width="1.7"/>
      <path d="M1133.4,13.4 A6,6 0 0 1 1141.8,13.4" stroke-width="1.7"/>
    </g>
    <circle cx="1137.6" cy="16.6" r="1.5" fill="#e8edf0"/>
    <!-- Y -->
    <rect x="1151.6" y="2.2" width="20.6" height="18.4" fill="#030303"/>
    <path d="M1151.6,3.4 C1156,4.6 1161,7.6 1162,11 C1163,7.6 1167.6,4.6 1172.2,3.4 V5.4 C1167.6,7.6 1164.4,10.8 1163.8,14.2 L1163.2,20.6 H1160.6 L1160,14.2 C1159.4,10.8 1156.4,7.6 1151.6,5.4Z" fill="#f4f4f4"/>
    <!-- volume -->
    <path d="M1177,9 h3.6 l4,-4.2 v13.6 l-4,-4.2 h-3.6z" fill="#e8edf0"/>
    <g fill="none" stroke="#e8edf0" stroke-linecap="round" stroke-width="1.5">
      <path d="M1187,8.6 A4.6,4.6 0 0 1 1187,14.6"/>
      <path d="M1189.6,6.2 A8,8 0 0 1 1189.6,17"/>
      <path d="M1192.2,4.2 A11,11 0 0 1 1192.2,19" />
    </g>
  </svg>
  <span class="t" style="left:56px">(2) Boris Brejcha - Night Owl ...</span>
  <span class="t" style="left:243.5px;letter-spacing:-.24px">HexEd.it - sublime_text - Moz...</span>
  <span class="t" style="left:431px;letter-spacing:-.05px">/home/sk3r0r/Desktop/123 -...</span>
  <span class="t" style="left:618px;letter-spacing:-.27px">[OBS 23.1.0 (linux) - Profile: ...</span>
  <span class="t" style="left:806.5px;letter-spacing:-.07px">Terminal - root@sk3r0r: /ho...</span>
  <span class="t" style="left:1209.5px;letter-spacing:-.2px">13 apr, 15:22</span>
</div>
</body>
</html>
